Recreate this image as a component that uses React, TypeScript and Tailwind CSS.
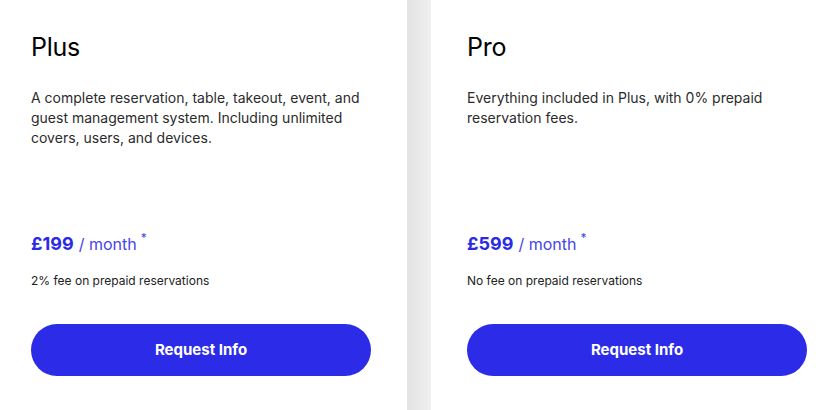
import React from 'react';

interface Plan {
  name: string;
  description: string;
  price: string;
  fee: string;
}

const plans: Plan[] = [
  {
    name: 'Plus',
    description:
      'A complete reservation, table, takeout, event, and guest management system. Including unlimited covers, users, and devices.',
    price: '£199',
    fee: '2% fee on prepaid reservations',
  },
  {
    name: 'Pro',
    description: 'Everything included in Plus, with 0% prepaid reservation fees.',
    price: '£599',
    fee: 'No fee on prepaid reservations',
  },
];

const PlanCard: React.FC<{ plan: Plan; className?: string }> = ({ plan, className }) => (
  <div className={`bg-white pt-[31px] ${className ?? ''}`}>
    <h3 className="text-[25px] leading-[32px] font-normal text-black tracking-[-0.01em]">{plan.name}</h3>

    {/* fixed height keeps the price rows aligned across cards */}
    <p className="mt-[25px] h-[144px] text-[14px] leading-[20px] text-[#2b2b2b]">{plan.description}</p>

    <div className="flex items-baseline text-[#2b2be6] leading-[24px]">
      <span className="text-[18px] font-bold">{plan.price}</span>
      <span className="ml-[5px] text-[16px] text-[#4545ea]">/ month</span>
      <span className="ml-[4px] -translate-y-[8px] text-[12px] text-[#4545ea]">*</span>
    </div>

    <p className="mt-[15px] text-[12px] leading-[16px] text-[#222]">{plan.fee}</p>

    <button className="mt-[35px] flex h-[52px] w-[340px] items-center justify-center rounded-full bg-[#2b2be8] text-[15px] font-bold text-white">
      Request Info
    </button>
  </div>
);

export default function App() {
  return (
    <div
      className="grid h-[410px] w-[833px] grid-cols-[407px_24px_402px] overflow-hidden bg-white"
      style={{ fontFamily: 'Inter, "Noto Sans", sans-serif' }}
    >
      <PlanCard plan={plans[0]} className="pl-[31px] pr-[36px]" />
      <div className="bg-gradient-to-r from-[#e3e3e3] to-[#efefef]" />
      <PlanCard plan={plans[1]} className="pl-[36px]" />
    </div>
  );
}
